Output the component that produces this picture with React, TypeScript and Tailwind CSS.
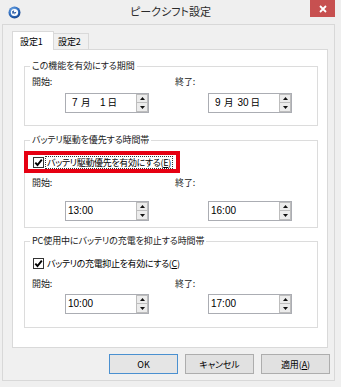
import type { ReactNode } from "react";

const JP =
  "font-['Noto_Sans_CJK_JP','Noto_Sans',sans-serif] [font-feature-settings:'palt']";
const NUM = "font-['Liberation_Sans','Arial',sans-serif]";
const BODY = "text-[9px] tracking-[-0.1px]";

function AppIcon() {
  return (
    <svg width="13" height="13" viewBox="0 0 13 13">
      <defs>
        <radialGradient id="ic" cx="0.4" cy="0.35" r="0.7">
          <stop offset="0" stopColor="#8fc0f0" />
          <stop offset="0.6" stopColor="#2d6cc0" />
          <stop offset="1" stopColor="#163f82" />
        </radialGradient>
      </defs>
      <circle cx="6.5" cy="6.5" r="6" fill="url(#ic)" />
      <circle cx="6.5" cy="6.5" r="3.6" fill="#ffffff" />
      <path d="M4.2 5.2 L6.2 4.2 L5.6 6.6 L8.6 5.8 L6.2 9 L6.8 7.2 L4.4 7.8 Z" fill="#1c4f9c" />
    </svg>
  );
}

function Arrow({ up }: { up?: boolean }) {
  return (
    <svg width="5" height="3" viewBox="0 0 5 3">
      <path d={up ? "M0 3 L2.5 0 L5 3 Z" : "M0 0 L5 0 L2.5 3 Z"} fill="#111" />
    </svg>
  );
}

function Spin({ children }: { children: ReactNode }) {
  return (
    <div className="flex h-[20px] w-[84px] items-center border border-[#abadb3] bg-white">
      <div className="flex flex-1 items-center text-[10px] leading-none text-black">{children}</div>
      <div className="flex h-[18px] w-[12px] flex-col">
        <div className="flex h-[9px] items-center justify-center border border-[#bdbdbd] bg-[#ececec]">
          <Arrow up />
        </div>
        <div className="flex h-[9px] items-center justify-center border border-t-0 border-[#bdbdbd] bg-[#ececec]">
          <Arrow />
        </div>
      </div>
    </div>
  );
}

function DateValue({ m, d }: { m: string; d: string }) {
  return (
    <div className="flex items-center pl-[6px]">
      <span className={`${NUM} w-[6px]`}>{m}</span>
      <span className={`${JP} ml-[3px] text-[9.5px]`}>月</span>
      <span className={`${NUM} ml-[3px] w-[12px] text-right`}>{d}</span>
      <span className={`${JP} ml-[2px] text-[9.5px]`}>日</span>
    </div>
  );
}

function TimeValue({ t }: { t: string }) {
  return <span className={`${NUM} pl-[2px]`}>{t}</span>;
}

function Group({
  title,
  className,
  children,
}: {
  title: string;
  className: string;
  children: ReactNode;
}) {
  return (
    <div className={`relative w-[294px] border border-[#dcdcdc] ${className}`}>
      <span
        className={`absolute -top-[7px] left-[5px] whitespace-nowrap bg-white px-[2px] leading-[12px] text-[#1a1a1a] ${BODY}`}
      >
        {title}
      </span>
      {children}
    </div>
  );
}

function Columns({ children }: { children: ReactNode }) {
  return <div className="grid grid-cols-[143px_143px] pl-[7px]">{children}</div>;
}

function LabelRow() {
  return (
    <Columns>
      <span className={`h-[10px] leading-[10px] text-[#1a1a1a] ${BODY}`}>開始:</span>
      <span className={`h-[10px] leading-[10px] text-[#1a1a1a] ${BODY}`}>終了:</span>
    </Columns>
  );
}

function SpinRow({ className, a, b }: { className: string; a: ReactNode; b: ReactNode }) {
  return (
    <div className={className}>
      <Columns>
        <div className="ml-[33px]">
          <Spin>{a}</Spin>
        </div>
        <div className="ml-[33px]">
          <Spin>{b}</Spin>
        </div>
      </Columns>
    </div>
  );
}

function Check() {
  return (
    <span className="flex h-[11px] w-[11px] shrink-0 items-center justify-center border border-[#333] bg-white">
      <svg width="9" height="9" viewBox="0 0 9 9">
        <path d="M1.3 4.6 L3.5 7 L7.8 1.6" fill="none" stroke="#000" strokeWidth="1.9" />
      </svg>
    </span>
  );
}

function Button({ children, primary }: { children: ReactNode; primary?: boolean }) {
  return (
    <div
      className={`flex h-[20px] w-[69px] items-center justify-center leading-none text-black ${BODY} ${
        primary ? "border border-[#4a90d0] bg-[#e5e5e5]" : "border border-[#adadad] bg-[#e1e1e1]"
      }`}
    >
      {children}
    </div>
  );
}

function CheckRow({
  highlighted,
  children,
}: {
  highlighted?: boolean;
  children: ReactNode;
}) {
  return (
    <div
      className={`-ml-px mt-[10px] flex h-[22px] w-fit items-center border-[4px] pl-[5px] pr-[3px] ${
        highlighted ? "border-[#e60012]" : "border-transparent"
      }`}
    >
      <Check />
      <span
        className={`ml-px whitespace-nowrap border px-px text-[9px] leading-[11px] tracking-[-0.35px] text-black ${
          highlighted ? "border-dotted border-[#333]" : "border-transparent"
        }`}
      >
        {children}
      </span>
    </div>
  );
}

export default function App() {
  return (
    <div className={`${JP} flex h-[387px] w-[341px] flex-col overflow-hidden bg-[#efefef]`}>
      {/* Title bar */}
      <div className="grid h-[24px] grid-cols-[1fr_auto_1fr]">
        <div className="flex items-start pl-[8px] pt-[6px]">
          <AppIcon />
        </div>
        <div className="flex items-center pb-[1px] text-[11px] leading-none text-[#2b2b2b]">
          ピークシフト設定
        </div>
        <div className="flex items-start justify-end pr-[6px]">
          <div className="flex h-[17px] w-[25px] items-center justify-center bg-[#c75050]">
            <svg width="8" height="8" viewBox="0 0 8 8">
              <path d="M1 1 L7 7 M7 1 L1 7" stroke="#fff" strokeWidth="1.8" />
            </svg>
          </div>
        </div>
      </div>

      {/* Client area */}
      <div className="mb-[6px] ml-[2px] mr-[6px] flex flex-1 flex-col border border-[#d8d8d8] bg-[#f0f0f0] pl-[9px] pt-[6px]">
        {/* Tabs */}
        <div className="flex h-[18px] items-end">
          <div
            className={`relative z-10 -mb-px flex h-[19px] w-[42px] items-center border-x border-t border-[#d9d9d9] bg-white pl-[7px] leading-none text-black ${BODY}`}
          >
            設定1
          </div>
          <div
            className={`flex h-[16px] w-[35px] items-center border-r border-t border-[#d9d9d9] bg-[#f0f0f0] pl-[4px] leading-none text-black ${BODY}`}
          >
            設定2
          </div>
        </div>

        {/* Tab panel */}
        <div className="flex h-[299px] w-[316px] flex-col border border-[#d9d9d9] bg-white pl-[11px]">
          <Group title="この機能を有効にする期間" className="mt-[16px] h-[60px]">
            <div className="mt-[10px]">
              <LabelRow />
            </div>
            <SpinRow
              className="mt-[6px]"
              a={<DateValue m="7" d="1" />}
              b={<DateValue m="9" d="30" />}
            />
          </Group>

          <Group title="バッテリ駆動を優先する時間帯" className="mt-[14px] h-[88px]">
            <CheckRow highlighted>
              バッテリ駆動優先を有効にする(<span className="underline">E</span>)
            </CheckRow>
            <div className="mt-[5px]">
              <LabelRow />
            </div>
            <SpinRow
              className="mt-[13px]"
              a={<TimeValue t="13:00" />}
              b={<TimeValue t="16:00" />}
            />
          </Group>

          <Group title="PC使用中にバッテリの充電を抑止する時間帯" className="mt-[13px] h-[87px]">
            <CheckRow>
              バッテリの充電抑止を有効にする(<span className="underline">C</span>)
            </CheckRow>
            <div className="mt-[5px]">
              <LabelRow />
            </div>
            <SpinRow
              className="mt-[5px]"
              a={<TimeValue t="10:00" />}
              b={<TimeValue t="17:00" />}
            />
          </Group>
        </div>

        {/* Buttons */}
        <div className="mr-[4px] mt-[6px] flex justify-end gap-[7px]">
          <Button primary>OK</Button>
          <Button>キャンセル</Button>
          <Button>
            適用(<span className="underline">A</span>)
          </Button>
        </div>
      </div>
    </div>
  );
}
